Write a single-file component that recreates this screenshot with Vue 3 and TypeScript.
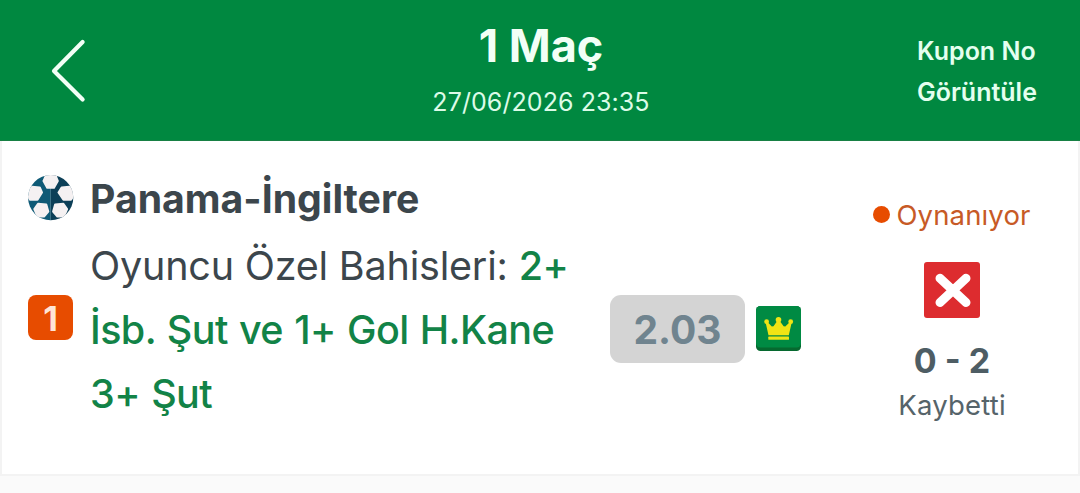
<script setup lang="ts">
interface Match {
  order: number
  teams: string
  market: string
  pickLines: string[]
  odds: string
  status: string
  score: string
  result: string
}

const match: Match = {
  order: 1,
  teams: 'Panama-İngiltere',
  market: 'Oyuncu Özel Bahisleri:',
  pickLines: ['2+', 'İsb. Şut ve 1+ Gol H.Kane', '3+ Şut'],
  odds: '2.03',
  status: 'Oynanıyor',
  score: '0 - 2',
  result: 'Kaybetti',
}
</script>

<template>
  <main class="page">
    <header class="header">
      <button class="back" aria-label="Geri">
        <svg width="36" height="64" viewBox="0 0 36 64">
          <path d="M32.600 3 L4 32 L32.600 60.500" fill="none" stroke="#f2fff6" stroke-width="4.200" stroke-linecap="round" stroke-linejoin="round" />
        </svg>
      </button>
      <div class="heading">
        <h1 class="title">1 Maç</h1>
        <div class="date">27/06/2026 23:35</div>
      </div>
      <div class="coupon">Kupon No<br />Görüntüle</div>
    </header>

    <section class="card">
      <div class="icons">
        <svg class="ball" width="46" height="46" viewBox="0 0 46 46">
          <defs>
            <clipPath id="ball-clip"><circle cx="22.700" cy="22.700" r="22.600" /></clipPath>
          </defs>
          <g clip-path="url(#ball-clip)">
            <rect width="22.700" height="46" fill="#0f5a76" />
            <rect x="22.700" width="23.300" height="46" fill="#0c3f57" />
            <g fill="#f5f1f2" stroke="#f5f1f2" stroke-width="2" stroke-linejoin="round">
              <path d="M18 0.500 H27.500 L29.800 6 L26 12.700 H19.200 L15.500 6 Z" />
              <path d="M0.500 14.500 L4 11.800 L11.800 12.500 L14 17.500 L9.500 24.800 L2 24.800 L-1 20 Z" />
              <path d="M45 14.500 L41.400 11.800 L33.600 12.500 L30.500 17.500 L35.400 24.800 L43 24.800 L46 20 Z" />
              <path d="M10 28.800 L18.300 29.500 L20.300 36.500 L16 41.500 L9.500 41.500 L6.300 34 Z" />
              <path d="M35.400 28.800 L27.100 29.500 L25.100 36.500 L29.400 41.500 L35.900 41.500 L39.100 34 Z" />
            </g>
          </g>
        </svg>
        <span class="order">{{ match.order }}</span>
      </div>

      <div class="details">
        <h2 class="teams">{{ match.teams }}</h2>
        <div class="bet">
          <div v-for="(line, i) in match.pickLines" :key="line" class="bet-line">
            <span v-if="i === 0" class="market">{{ match.market }}</span>
            <span class="pick">{{ line }}</span>
          </div>
        </div>
      </div>

      <div class="odds-group">
        <span class="odds">{{ match.odds }}</span>
        <svg class="crown" width="45" height="45" viewBox="0 0 45 45">
          <rect width="45" height="45" rx="4.500" fill="#06692f" />
          <rect width="45" height="41.500" rx="4.500" fill="#008a43" />
          <g fill="#f0e414">
            <circle cx="10.600" cy="15.700" r="2.400" />
            <circle cx="22.500" cy="13.700" r="2.800" />
            <circle cx="34.700" cy="15.700" r="2.400" />
            <path d="M9.500 16 L11.200 15.700 L15.800 20.500 L17.500 20.300 L21.200 15 H23.800 L27.600 20.300 L29.300 20.500 L34.200 15.700 L35.800 16 L32.800 29.300 H12.500 Z" />
            <rect x="12.300" y="30.600" width="20.700" height="3.200" rx=".6" />
          </g>
        </svg>
      </div>

      <div class="outcome">
        <div class="status"><span class="dot"></span>{{ match.status }}</div>
        <svg class="cross" width="56" height="56" viewBox="0 0 56 56">
          <rect width="56" height="56" rx="3" fill="#dd2c2f" />
          <path d="M16 16.300 L42 40.500 M42 16.300 L16 40.500" fill="none" stroke="#fff" stroke-width="9" stroke-linecap="round" />
        </svg>
        <div class="score">{{ match.score }}</div>
        <div class="result">{{ match.result }}</div>
      </div>
    </section>
  </main>
</template>

<style>
body {
  background: #fafafa;
}
</style>

<style scoped>
.page {
  box-sizing: border-box;
  width: 1080px;
  height: 493px;
  overflow: hidden;
  background: #fafafa;
  color: #3c464c;
  font-family: Inter, "Liberation Sans", sans-serif;
}
.header {
  box-sizing: border-box;
  display: grid;
  grid-template-columns: 306px 470px 304px;
  height: 141px;
  background: #008840;
  color: #f2fff6;
  border-bottom: 1px solid #178044;
}
.back {
  justify-self: start;
  align-self: start;
  margin: 39px 0 0 50px;
  padding: 0;
  border: 0;
  background: none;
  line-height: 0;
}
.heading {
  text-align: center;
}
.title {
  margin: 19px 0 0;
  font-size: 45px;
  line-height: 54px;
  font-weight: 700;
}
.date {
  margin-top: 13px;
  font-size: 25px;
  line-height: 32px;
  letter-spacing: 0.080px;
  color: #dcfbe8;
}
.coupon {
  margin: 31px 0 0 141px;
  font-size: 25px;
  line-height: 41px;
  font-weight: 600;
  color: #e4ffef;
}
.card {
  box-sizing: border-box;
  display: grid;
  grid-template-columns: 88px 520px 238px 230px;
  height: 335px;
  background: #fff;
  border: 2px solid #f3f3f3;
  border-top: 0;
}
.icons {
  display: flex;
  flex-direction: column;
  align-items: flex-start;
  padding: 34px 0 0 26px;
}
.ball {
  display: block;
}
.order {
  width: 45px;
  height: 45px;
  margin-top: 74px;
  border-radius: 8px;
  background: #e74c00;
  color: #ffe5d6;
  font-size: 34px;
  line-height: 47px;
  font-weight: 700;
  text-align: center;
}
.details {
  padding-top: 34px;
}
.teams {
  margin: 0;
  font-size: 39.200px;
  line-height: 48px;
  font-weight: 700;
}
.bet {
  margin-top: 11px;
  font-size: 39.500px;
}
.bet-line {
  display: flex;
  gap: 11px;
  height: 64px;
  line-height: 64px;
  white-space: nowrap;
}
.market {
  letter-spacing: -0.200px;
}
.pick {
  color: #128347;
  font-weight: 500;
  letter-spacing: -0.600px;
  word-spacing: 1.300px;
}
.odds-group {
  display: flex;
  align-items: center;
  align-self: start;
  gap: 11px;
  padding-top: 154px;
}
.odds {
  width: 135px;
  height: 68px;
  border-radius: 11px;
  background: #d4d4d4;
  color: #70848f;
  font-size: 39px;
  line-height: 70px;
  font-weight: 700;
  text-align: center;
}
.crown {
  margin-top: -2px;
}
.outcome {
  display: flex;
  flex-direction: column;
  align-items: center;
  width: 208px;
  padding-top: 57px;
}
.status {
  display: flex;
  align-items: center;
  gap: 6px;
  font-size: 27.500px;
  line-height: 34px;
  letter-spacing: 0.150px;
  color: #c75a26;
}
.dot {
  width: 17px;
  height: 17px;
  margin-top: -2px;
  border-radius: 50%;
  background: #e74c00;
}
.cross {
  display: block;
  margin-top: 30px;
}
.score {
  margin-top: 22px;
  font-size: 34px;
  line-height: 42px;
  font-weight: 700;
  color: #4e5d64;
}
.result {
  margin-top: 5px;
  font-size: 27.500px;
  line-height: 36px;
  letter-spacing: 0.200px;
  color: #56646a;
}
</style>
